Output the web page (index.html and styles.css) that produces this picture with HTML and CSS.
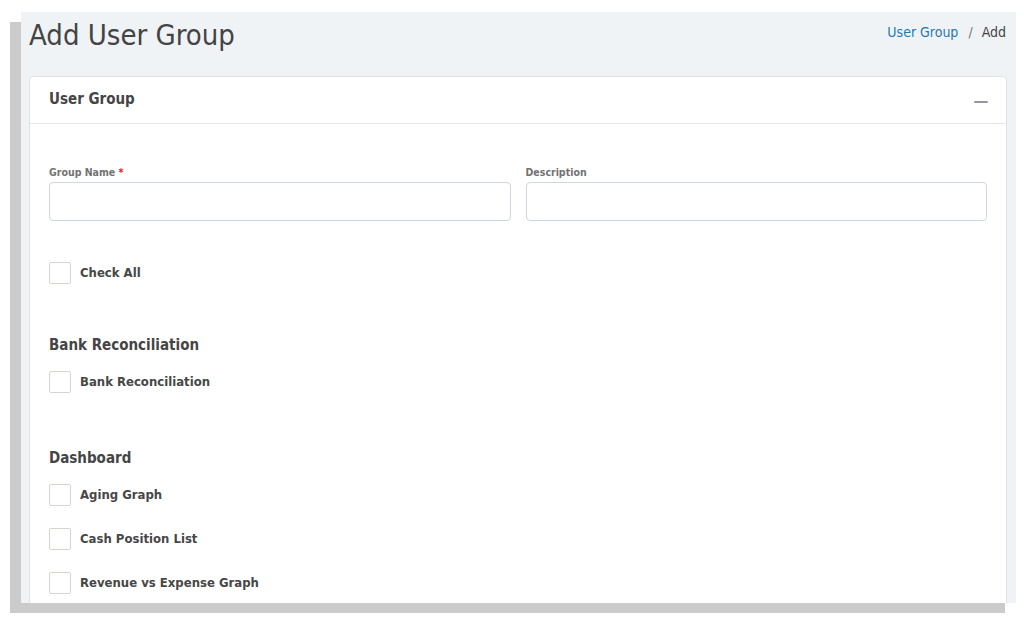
FILE: index.html
```html
<!DOCTYPE html>
<html lang="en">
<head>
<meta charset="utf-8">
<title>Add User Group</title>
<link rel="stylesheet" href="styles.css">
</head>
<body>
<div class="frame">
  <div class="page-head">
    <h1 class="page-title">Add User Group</h1>
    <nav class="crumbs"><a href="#" class="crumb-link">User Group</a><span class="crumb-sep">/</span><span class="crumb-current">Add</span></nav>
  </div>
  <section class="card">
    <header class="card-head">
      <h2 class="card-title">User Group</h2>
      <span class="collapse-icon"></span>
    </header>
    <div class="card-body">
      <div class="field-grid">
        <div class="field">
          <label class="field-label">Group Name <span class="req">*</span></label>
          <input class="field-input" type="text">
        </div>
        <div class="field">
          <label class="field-label">Description</label>
          <input class="field-input" type="text">
        </div>
      </div>
      <div class="check-row check-all"><span class="box"></span><span class="check-text">Check All</span></div>

      <h3 class="group-title first">Bank Reconciliation</h3>
      <div class="check-list">
        <div class="check-row"><span class="box"></span><span class="check-text">Bank Reconciliation</span></div>
      </div>

      <h3 class="group-title">Dashboard</h3>
      <div class="check-list">
        <div class="check-row"><span class="box"></span><span class="check-text">Aging Graph</span></div>
        <div class="check-row"><span class="box"></span><span class="check-text">Cash Position List</span></div>
        <div class="check-row"><span class="box"></span><span class="check-text">Revenue vs Expense Graph</span></div>
      </div>
    </div>
  </section>
</div>
</body>
</html>
```

FILE: styles.css
```css
* { box-sizing: border-box; }
html, body { margin: 0; padding: 0; background: #ffffff; }
body {
  font-family: "DejaVu Sans Condensed", "DejaVu Sans", sans-serif;
  color: #454545;
  height: 625px;
  overflow: hidden;
}
.frame {
  margin: 12px 0 0 21px;
  width: 995px;
  height: 591px;
  background: #f0f3f6;
  box-shadow: -11px 10px 0 0 #cbcbcb;
  overflow: hidden;
}
.page-head {
  display: flex;
  justify-content: space-between;
  align-items: flex-start;
  padding: 0 10px 0 8px;
  height: 64px;
}
.page-title {
  margin: 0;
  font-weight: 400;
  font-size: 29px;
  line-height: 46px;
  color: #444444;
}
.crumbs {
  font-size: 14px;
  line-height: 16px;
  margin-top: 12px;
  display: flex;
  align-items: center;
}
.crumb-link { color: #1f79b0; text-decoration: none; }
.crumb-sep { color: #777777; margin: 0 9px 0 10px; }
.crumb-current { color: #454545; }
.card {
  margin: 0 9px 0 8px;
  background: #ffffff;
  border: 1px solid #dde2e7;
  border-radius: 4px;
  height: 600px;
}
.card-head {
  height: 47px;
  border-bottom: 1px solid #e3e6ea;
  display: flex;
  align-items: center;
  justify-content: space-between;
  padding: 0 18px 2px 19px;
}
.card-title {
  margin: 0;
  font-size: 15px;
  font-weight: 700;
  color: #454545;
}
.collapse-icon {
  width: 14px;
  height: 2px;
  background: #8f9aa6;
  border-radius: 1px;
  margin-top: 5px;
}
.card-body { padding: 41px 19px 0 19px; }
.field-grid {
  display: grid;
  grid-template-columns: 1fr 1fr;
  column-gap: 15px;
}
.field-label {
  display: block;
  font-size: 10.5px;
  font-weight: 700;
  line-height: 14px;
  color: #727272;
  margin-bottom: 3px;
}
.req { color: #e02020; }
.field-input {
  display: block;
  width: 100%;
  height: 39px;
  border: 1px solid #cfd6de;
  border-radius: 4px;
  background: #ffffff;
  outline: none;
}
.check-row {
  display: flex;
  align-items: center;
  height: 22px;
}
.check-all { margin-top: 41px; }
.box {
  width: 22px;
  height: 22px;
  border: 1px solid #d8d5d0;
  border-radius: 2px;
  background: #ffffff;
  flex: none;
}
.check-text {
  margin-left: 9px;
  margin-bottom: 2px;
  font-size: 13px;
  font-weight: 700;
  color: #474747;
}
.group-title {
  margin: 55px 0 16px 0;
  font-size: 15px;
  font-weight: 700;
  line-height: 20px;
  color: #454545;
}
.group-title.first { margin-top: 51px; }
.check-list {
  display: flex;
  flex-direction: column;
  gap: 22px;
}
```
